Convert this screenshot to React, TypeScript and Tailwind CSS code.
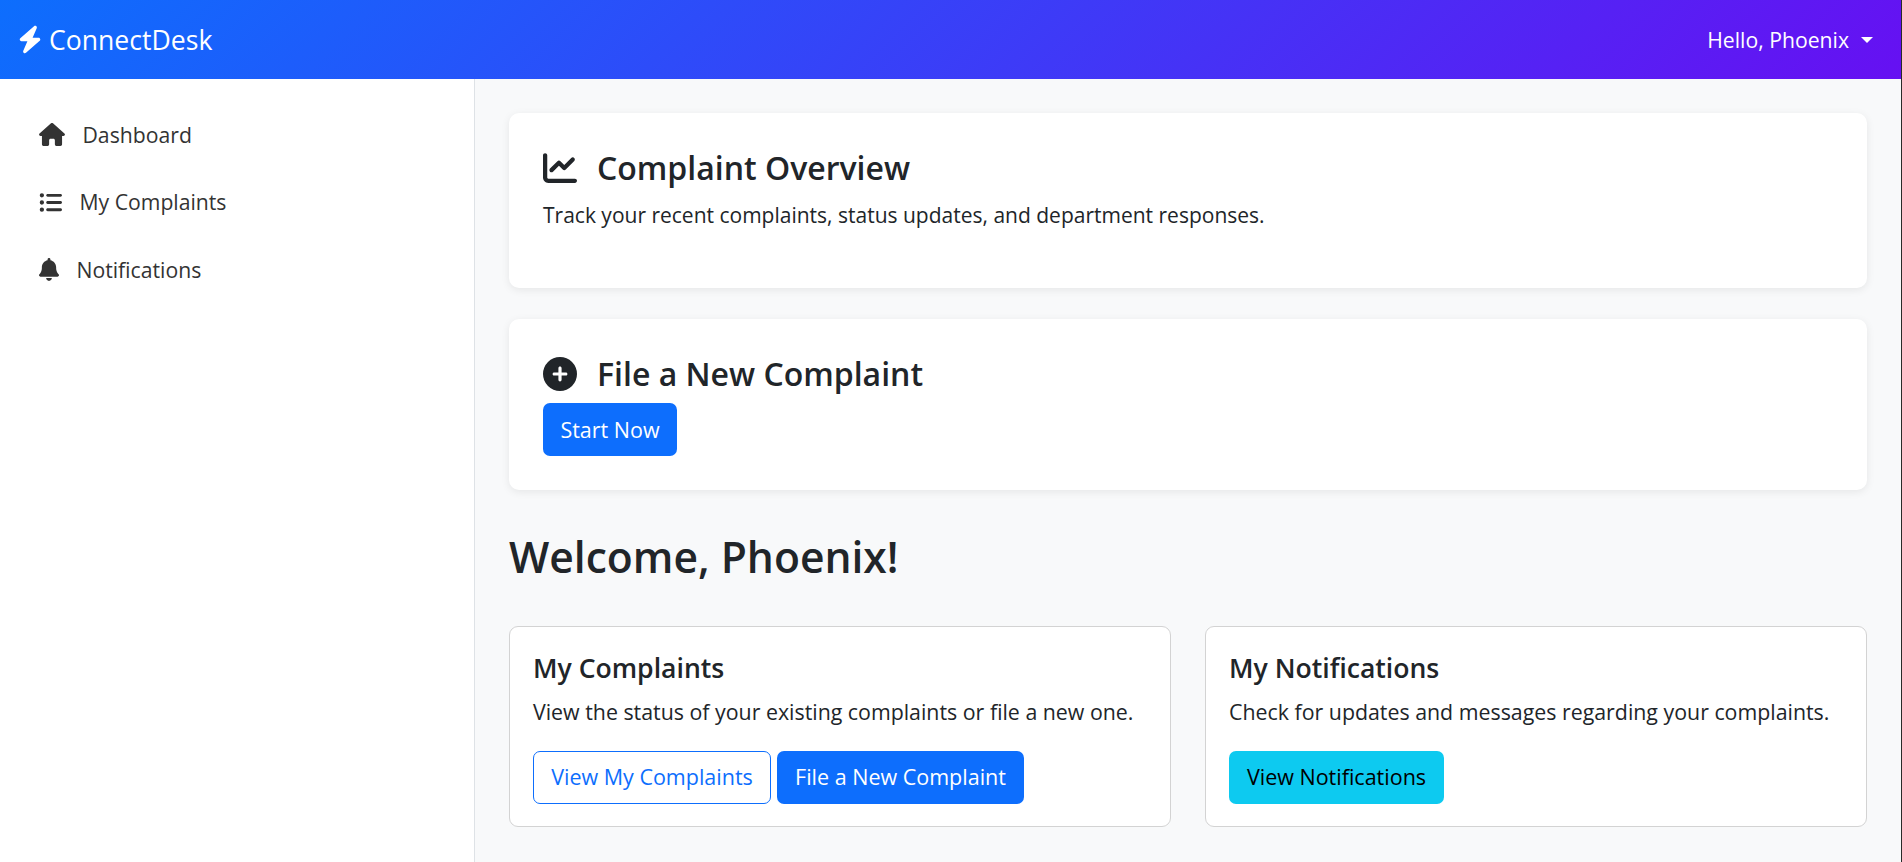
import { FaBolt, FaHouse, FaListUl, FaBell, FaChartLine, FaCirclePlus, } from "react-icons/fa6";

const font = "font-['Open_Sans','Noto_Sans',sans-serif]";

function NavItem({ icon, label }: { icon: React.ReactNode; label: string }) {
  return (
    <a className="flex h-[67.5px] items-center pl-[39px] text-[21.2px] text-[#333333]">
      {icon}
      <span className="ml-[17.5px]">{label}</span>
    </a>
  );
}

export default function App() {
  return (
    <div className={`flex h-[862px] flex-col overflow-hidden border-r border-[#2a2a2a] bg-[#f8f9fa] text-[#212529] ${font}`}>
      <header className="flex h-[79px] shrink-0 items-center justify-between bg-[linear-gradient(135deg,#0d6efd,#6610f2)] pl-[18px] pr-[28px] text-white">
        <div className="flex items-center gap-[7px] text-[26.6px]">
          <FaBolt className="mt-[1px] h-[29px] w-[24px]" />
          <span className="mt-[2px]">ConnectDesk</span>
        </div>
        <div className="flex items-center gap-[12px] text-[21.2px]">
          <span>Hello, Phoenix</span>
          <span className="mt-[1px] h-0 w-0 border-x-[6px] border-t-[6.5px] border-x-transparent border-t-white" />
        </div>
      </header>
      <div className="flex min-h-0 flex-1">
        <aside className="w-[475px] shrink-0 border-r border-[#dee2e6] bg-white pt-[22px]">
          <NavItem icon={<FaHouse className="h-[23px] w-[26px]" />} label="Dashboard" />
          <NavItem icon={<FaListUl className="h-[23px] w-[23px]" />} label="My Complaints" />
          <NavItem icon={<FaBell className="h-[23px] w-[20px]" />} label="Notifications" />
        </aside>
        <main className="flex flex-1 flex-col pl-[34px] pr-[34px] pt-[34px]">
          <section className="h-[175px] rounded-[10px] bg-white px-[34px] pt-[34px] shadow-[0_2px_8px_rgba(0,0,0,0.08)]">
            <h3 className="flex h-[42px] items-center text-[32px] font-semibold">
              <FaChartLine className="mr-[20px] h-[34px] w-[34px]" />
              Complaint Overview
            </h3>
            <p className="mt-[10px] text-[21px] leading-[32px]">Track your recent complaints, status updates, and department responses.</p>
          </section>
          <section className="mt-[31px] h-[171px] rounded-[10px] bg-white px-[34px] pt-[34px] shadow-[0_2px_8px_rgba(0,0,0,0.08)]">
            <h3 className="flex h-[42px] items-center text-[32px] font-semibold">
              <FaCirclePlus className="mr-[20px] h-[34px] w-[34px]" />
              File a New Complaint
            </h3>
            <button className="mt-[8px] h-[53px] w-[134px] rounded-[7px] bg-[#0d6efd] pt-[1px] text-[21.5px] text-white">Start Now</button>
          </section>
          <h2 className="mt-[33px] text-[42.6px] font-semibold leading-[66px]">Welcome, Phoenix!</h2>
          <div className="mt-[37px] grid grid-cols-2 gap-[34px]">
            <div className="h-[201px] rounded-[9px] border border-[#d3d3d3] bg-white px-[23px] pt-[23px]">
              <h5 className="text-[26.6px] font-semibold leading-[36px]">My Complaints</h5>
              <p className="mt-[10px] text-[21.35px] leading-[32px]">View the status of your existing complaints or file a new one.</p>
              <div className="mt-[23px] flex gap-[6px]">
                <button className="h-[53px] w-[238px] rounded-[7px] border border-[#0d6efd] text-[21.5px] text-[#0d6efd]">View My Complaints</button>
                <button className="h-[53px] w-[247px] rounded-[7px] bg-[#0d6efd] text-[21.5px] text-white">File a New Complaint</button>
              </div>
            </div>
            <div className="h-[201px] rounded-[9px] border border-[#d3d3d3] bg-white px-[23px] pt-[23px]">
              <h5 className="text-[26.6px] font-semibold leading-[36px]">My Notifications</h5>
              <p className="mt-[10px] text-[21.35px] leading-[32px]">Check for updates and messages regarding your complaints.</p>
              <div className="mt-[23px] flex">
                <button className="h-[53px] w-[215px] rounded-[7px] bg-[#0dcaf0] text-[21.5px] text-black">View Notifications</button>
              </div>
            </div>
          </div>
        </main>
      </div>
    </div>
  );
}
